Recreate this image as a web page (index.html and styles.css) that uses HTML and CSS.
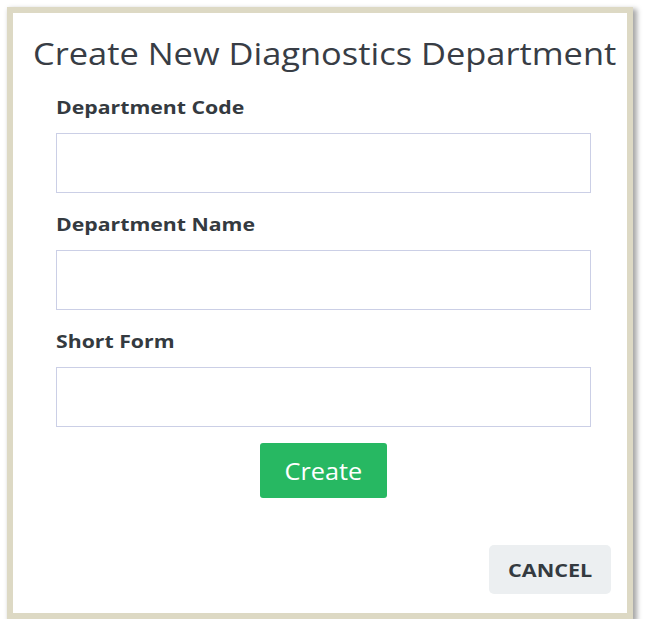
FILE: index.html
```html
<!DOCTYPE html>
<html>

<head>
	<meta charset="UTF-8">
	<title>Create New Diagnostics Department</title>
	<link rel="stylesheet" href="styles.css">
</head>

<body>
	<div class="frame">
		<div class="dialog">
			<h1 class="title"><span class="wide">Create New Diagnostics Department</span></h1>
			<form class="form">
				<label class="field">
					<span class="label"><span class="wide">Department Code</span></span>
					<input type="text">
				</label>
				<label class="field">
					<span class="label"><span class="wide">Department Name</span></span>
					<input type="text">
				</label>
				<label class="field">
					<span class="label"><span class="wide">Short Form</span></span>
					<input type="text">
				</label>
				<div class="submit">
					<button type="button" class="create"><span class="wide">Create</span></button>
				</div>
			</form>
			<div class="actions">
				<button type="button" class="cancel"><span class="wide">CANCEL</span></button>
			</div>
		</div>
	</div>
</body>

</html>
```

FILE: styles.css
```css
body,
html {
	margin: 0;
	padding: 0;
	background: #FFFFFF;
	font-family: 'Open Sans', sans-serif;
}

* {
	box-sizing: border-box;
}

/* the source picture is a bit stretched sideways */
.wide {
	display: inline-block;
	transform-origin: left center;
}

.frame {
	margin: 7px 0 0 7px;
	width: 626px;
	height: 612px;
	border: 6px solid #ddd9c4;
	box-shadow: 3px 3px 5px 1px rgba(0, 0, 0, .35);
	background: #FFFFFF;
}

.dialog {
	display: flex;
	flex-direction: column;
	height: 100%;
	padding: 0 16px 0 20px;
}

.title {
	margin: 18px 0 0;
	font-size: 31px;
	font-weight: 400;
	color: #383d45;
	line-height: 44px;
	white-space: nowrap;
}

.title .wide {
	transform: scaleX(1.11);
}

.form {
	display: flex;
	flex-direction: column;
	padding: 0 20px 0 23px;
}

.field {
	display: flex;
	flex-direction: column;
}

.field:first-child .label {
	margin-top: 20px;
}

.field .label {
	font-size: 18px;
	font-weight: 700;
	color: #343a40;
	line-height: 24px;
	margin: 19px 0 14px;
}

.field .label .wide {
	transform: scaleX(1.18);
}

.field input {
	height: 60px;
	border: 1px solid #cbcfe6;
	background: #FFFFFF;
	font-size: 16px;
}

.submit {
	display: flex;
	justify-content: center;
	margin-top: 16px;
}

.create {
	width: 127px;
	height: 55px;
	border: 0 none;
	border-radius: 3px;
	background: #27b862;
	color: #FFFFFF;
	font-family: 'Open Sans', sans-serif;
	font-size: 23px;
}

.create .wide {
	transform-origin: center;
	transform: scaleX(1.1);
}

.actions {
	display: flex;
	justify-content: flex-end;
	margin-top: auto;
	padding-bottom: 19px;
}

.cancel {
	width: 122px;
	height: 49px;
	border: 0 none;
	border-radius: 5px;
	background: #eceff1;
	color: #343a40;
	font-family: 'Open Sans', sans-serif;
	font-size: 18px;
	font-weight: 700;
}

.cancel .wide {
	transform-origin: center;
	transform: scaleX(1.2);
}
```
